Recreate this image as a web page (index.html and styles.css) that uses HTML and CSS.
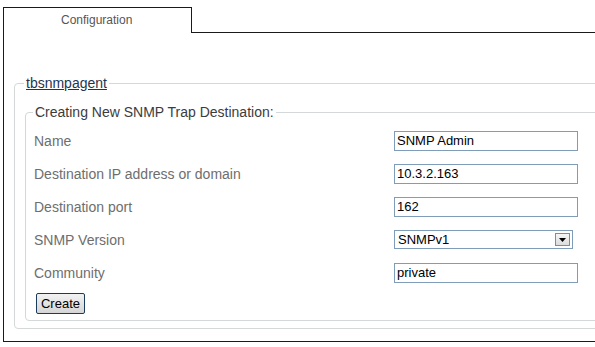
FILE: index.html
```html
<!DOCTYPE html>
<html>
<head>
    <title>SNMP Trap Destination</title>
    <meta charset="utf-8">
    <link rel="stylesheet" href="styles.css">
</head>
<body>
    <div class="page">
        <div class="tabbar">
            <div class="tab">Configuration</div>
            <div class="tab-rest"></div>
        </div>
        <div class="panel">
            <fieldset class="agent">
                <legend><a href="#">tbsnmpagent</a></legend>
                <fieldset class="trap">
                    <legend>Creating New SNMP Trap Destination:</legend>
                    <div class="form">
                        <label>Name</label>
                        <input type="text" value="SNMP Admin">
                        <label>Destination IP address or domain</label>
                        <input type="text" value="10.3.2.163">
                        <label>Destination port</label>
                        <input type="text" value="162">
                        <label>SNMP Version</label>
                        <div class="select">
                            <span class="select-text">SNMPv1</span>
                            <span class="select-btn"><svg width="7" height="4" viewBox="0 0 7 4"><path d="M0 0h7L3.5 4z" fill="#000"/></svg></span>
                        </div>
                        <label>Community</label>
                        <input type="text" value="private">
                    </div>
                    <button class="create">Create</button>
                </fieldset>
            </fieldset>
        </div>
    </div>
</body>
</html>
```

FILE: styles.css
```css
*{
    box-sizing: border-box;
}
body{
    margin: 0;
    background: #ffffff;
    font-family: "Liberation Sans", Arial, sans-serif;
}
.page{
    overflow: hidden;
    height: 347px;
}
.tabbar{
    display: flex;
    margin: 7px -20px 0 3px;
}
.tab{
    width: 189px;
    height: 26px;
    border: 1px solid #1a1a1a;
    border-bottom: 0;
    font-size: 12px;
    color: #555555;
    padding: 5px 0 0 57px;
}
.tab-rest{
    flex: 1;
    border-bottom: 1px solid #1a1a1a;
}
.panel{
    margin: 0 -20px 0 3px;
    border-left: 1px solid #1a1a1a;
    border-bottom: 1px solid #1a1a1a;
    padding: 42px 0 12px 10px;
}
fieldset{
    margin: 0;
    border: 1px solid #d4d8d8;
    border-radius: 4px;
}
legend{
    padding: 0 2px;
    font-size: 14px;
    line-height: 16px;
}
.agent{
    padding: 13px 0 7px 10px;
}
.agent legend{
    margin-left: -1px;
}
.agent legend a{
    color: #1f3550;
}
.trap{
    padding: 4px 0 6px 8px;
}
.trap legend{
    color: #3c3c3c;
}
.form{
    display: grid;
    grid-template-columns: 360px auto;
    grid-auto-rows: 33px;
    align-items: center;
}
label{
    font-size: 14px;
    color: #6e6e6e;
}
input{
    width: 184px;
    height: 20px;
    border: 1px solid #7f9db9;
    padding: 0 2px;
    margin: 0;
    font-family: "Liberation Sans", Arial, sans-serif;
    font-size: 13px;
    color: #000000;
}
.select{
    position: relative;
    width: 179px;
    height: 19px;
    border: 1px solid #7f9db9;
    font-size: 13px;
    padding: 1px 0 0 3px;
}
.select-btn{
    position: absolute;
    right: 2px;
    top: 2px;
    width: 15px;
    height: 13px;
    border: 1px solid #8a8a8a;
    background: linear-gradient(#f6f6f6, #dcdcdc);
    display: flex;
    align-items: center;
    justify-content: center;
}
.create{
    margin: 4px 0 0 2px;
    width: 49px;
    height: 21px;
    border: 1px solid #1c3c5c;
    border-radius: 2px;
    background: linear-gradient(#f2f2f2, #d6d6d6);
    font-family: "Liberation Sans", Arial, sans-serif;
    font-size: 13px;
    color: #000000;
    padding: 0;
}
```
